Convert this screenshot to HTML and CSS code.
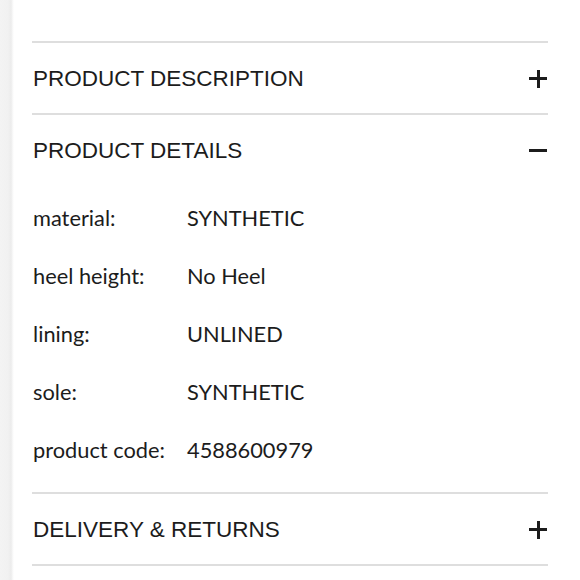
FILE: index.html
```html
<!DOCTYPE html>
<html lang="en">
<head>
<meta charset="utf-8">
<title>Product info</title>
<link rel="stylesheet" href="styles.css">
</head>
<body>
<div class="page">
  <div class="edge"></div>
  <div class="accordion">
    <section class="item">
      <div class="head">
        <span class="title">PRODUCT DESCRIPTION</span>
        <span class="icon plus"></span>
      </div>
    </section>
    <section class="item open">
      <div class="head">
        <span class="title">PRODUCT DETAILS</span>
        <span class="icon minus"></span>
      </div>
      <dl class="details">
        <div class="row"><dt>material:</dt><dd>SYNTHETIC</dd></div>
        <div class="row"><dt>heel height:</dt><dd>No Heel</dd></div>
        <div class="row"><dt>lining:</dt><dd>UNLINED</dd></div>
        <div class="row"><dt>sole:</dt><dd>SYNTHETIC</dd></div>
        <div class="row"><dt>product code:</dt><dd>4588600979</dd></div>
      </dl>
    </section>
    <section class="item">
      <div class="head">
        <span class="title">DELIVERY &amp; RETURNS</span>
        <span class="icon plus"></span>
      </div>
    </section>
  </div>
</div>
</body>
</html>
```
FILE: styles.css
```css
* { box-sizing: border-box; }
html, body { margin: 0; padding: 0; background: #fff; }
body { color: #1c1c1c; font-family: "Liberation Sans", Arial, sans-serif; }

.page {
  display: flex;
  min-height: 580px;
}
.edge {
  width: 14px;
  flex: none;
  background: linear-gradient(to right, #f3f3f3 0, #f1f1f1 8px, #ececec 11px, #fafafa 13px, #fff 14px);
}
.accordion {
  flex: 1;
  padding: 41px 32px 0 18px;
}
.item {
  border-top: 2px solid #dedede;
}
.item:last-child {
  border-bottom: 2px solid #dedede;
}
.head {
  height: 70px;
  display: flex;
  align-items: center;
  justify-content: space-between;
  padding: 1px 0 0 1px;
}
.title {
  font-size: 22.5px;
}
.icon {
  position: relative;
  width: 18px;
  height: 18px;
  margin-right: 1px;
}
.icon::before, .plus::after {
  content: "";
  position: absolute;
  background: #1c1c1c;
}
.icon::before {
  left: 0; right: 0; top: 7.5px; height: 3px;
}
.plus::after {
  top: 0; bottom: 0; left: 7.5px; width: 3px;
}
.details {
  margin: 0;
  padding: 3px 0 14px 1px;
  font-family: "Lato", "Liberation Sans", sans-serif;
  font-size: 21.8px;
}
.row {
  display: flex;
  height: 58px;
  align-items: center;
}
dt {
  width: 154px;
  flex: none;
}
dd {
  margin: 0;
}
```
